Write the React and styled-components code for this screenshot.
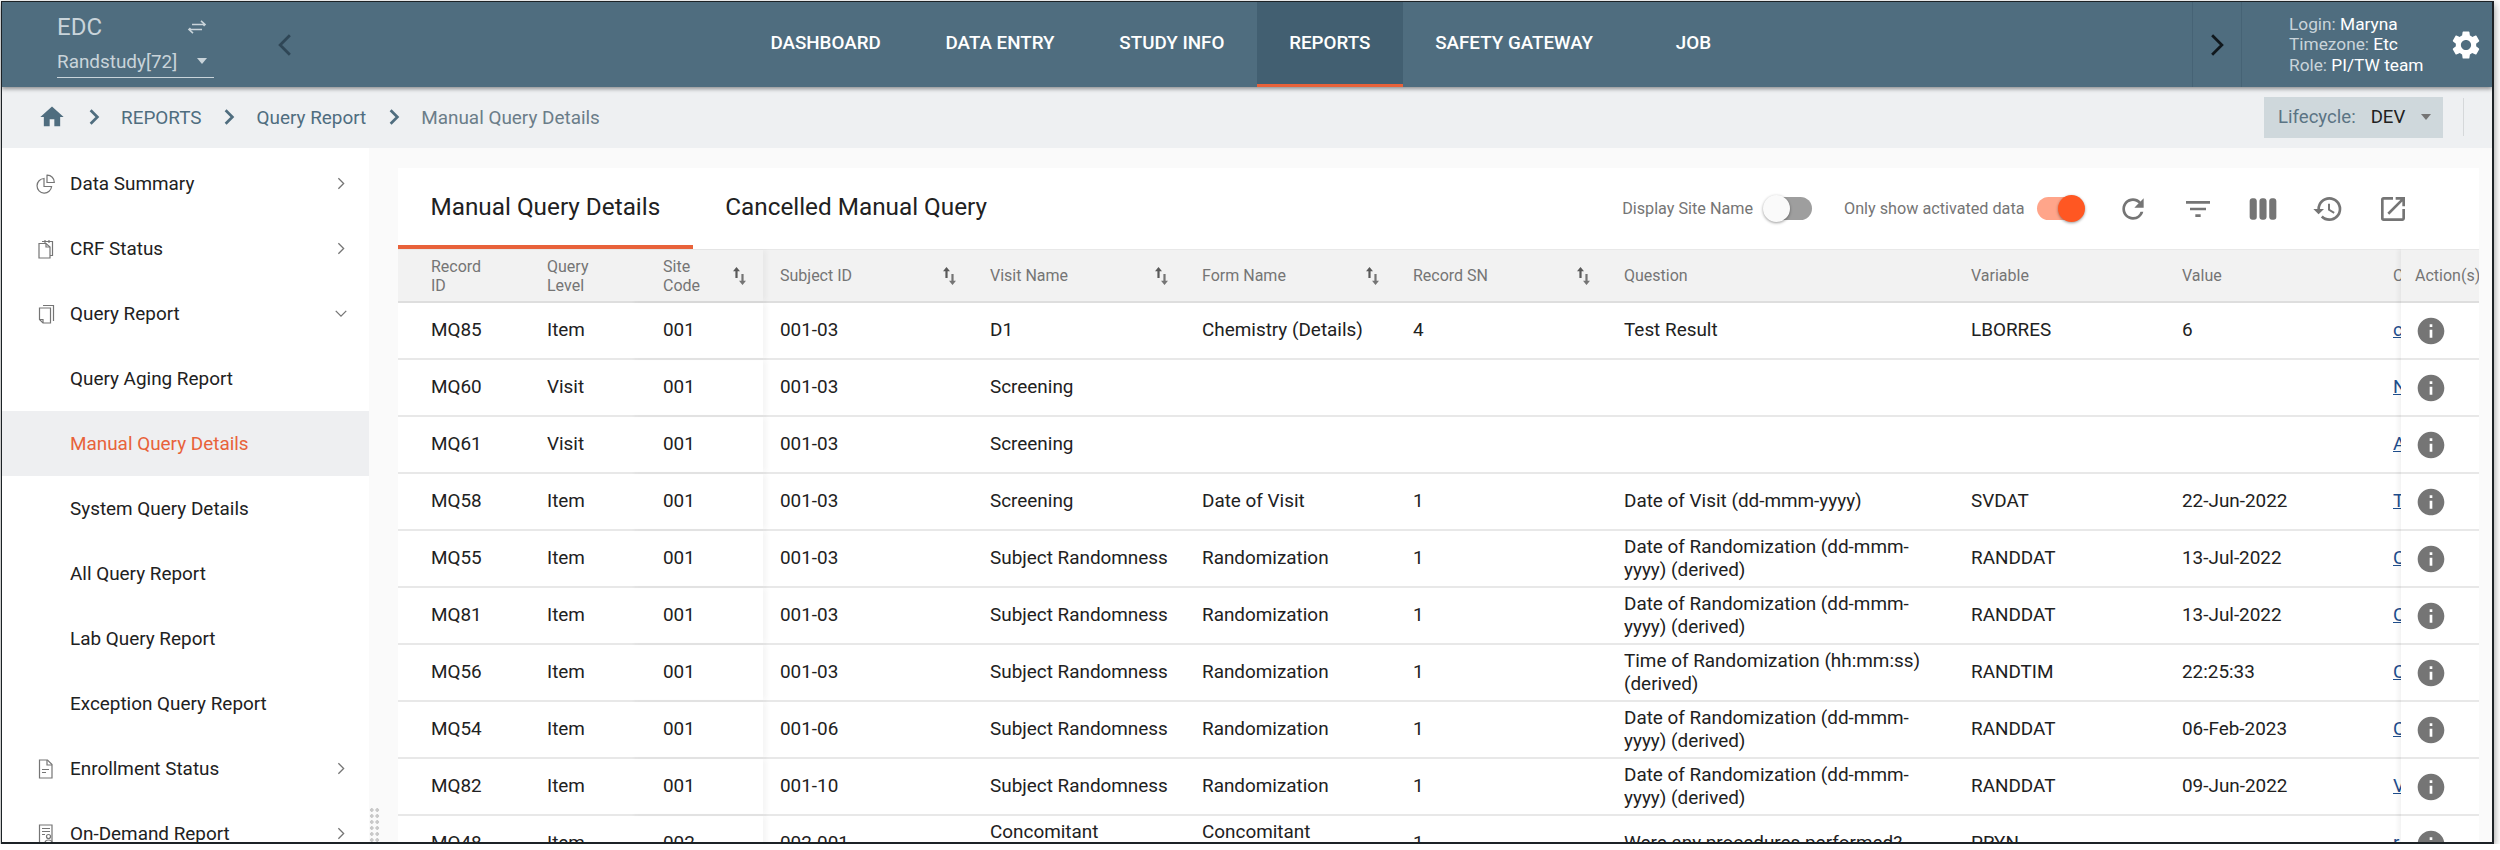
import React from "react";
import styled, { createGlobalStyle } from "styled-components";
import {
  MdHome,
  MdRefresh,
  MdFilterList,
  MdViewWeek,
  MdHistory,
  MdOpenInNew,
  MdInfo,
  MdSettings,
} from "react-icons/md";

const GlobalStyle = createGlobalStyle`
  html, body {
    margin: 0;
    padding: 0;
    background: #fff;
    font-family: Roboto, "Liberation Sans", sans-serif;
  }
  * { box-sizing: border-box; }
`;

const Frame = styled.div`
  width: 2493px;
  height: 843px;
  margin: 1px 0 0 1px;
  border: solid #1c2226;
  border-width: 1px 2px 2px 1px;
  box-shadow: 0 3px 8px rgba(0, 0, 0, 0.45);
  display: flex;
  flex-direction: column;
  overflow: hidden;
  background: #fff;
`;

const Header = styled.header`
  height: 85px;
  flex: none;
  display: flex;
  background: #4f6d7f;
  box-shadow: 0 2px 4px rgba(0, 0, 0, 0.4);
  position: relative;
  z-index: 2;
`;

const Brand = styled.div`
  width: 736px;
  display: flex;
  align-items: center;
  padding-left: 55px;
`;

const Project = styled.div`
  width: 157px;
  display: flex;
  flex-direction: column;
  color: #c9d4da;
`;

const ProductRow = styled.div`
  display: flex;
  align-items: center;
  justify-content: space-between;
  padding-right: 7px;
  height: 30px;
  font-size: 24px;
`;

const StudySelect = styled.div`
  display: flex;
  align-items: center;
  justify-content: space-between;
  margin-top: 7px;
  padding: 0 7px 3px 0;
  height: 29px;
  font-size: 18.9px;
  border-bottom: 1px solid #c9d4da;
`;

const Caret = styled.span`
  width: 0;
  height: 0;
  border-left: 5px solid transparent;
  border-right: 5px solid transparent;
  border-top: 6px solid ${(props) => props.color || "#c9d4da"};
`;

const BrandBack = styled.div`
  margin-left: 58px;
  display: flex;
  color: #2f4656;
`;

const Nav = styled.nav`
  flex: 1;
  display: flex;
`;

const NavItem = styled.a`
  display: flex;
  align-items: center;
  padding: 0 32.4px;
  margin-left: ${(props) => props.$gap || "0"};
  font-size: 18.8px;
  font-weight: 500;
  color: #fff;
  background: ${(props) => (props.$active ? "#425f71" : "transparent")};
  border-bottom: 3px solid ${(props) => (props.$active ? "#e8623a" : "transparent")};
`;

const NavScroll = styled.div`
  width: 50px;
  display: flex;
  align-items: center;
  justify-content: center;
  color: #10181d;
  border-left: 1px solid #466375;
  border-right: 1px solid #466375;
`;

const User = styled.div`
  width: 250px;
  display: flex;
  align-items: center;
  justify-content: space-between;
  padding: 0 9px 0 47px;
`;

const UserInfo = styled.div`
  font-size: 17.3px;
  line-height: 20.5px;
  color: #c9d4da;
  white-space: nowrap;
  b {
    font-weight: 400;
    color: #fff;
  }
`;

const CrumbBar = styled.div`
  height: 61px;
  flex: none;
  display: flex;
  align-items: center;
  padding: 0 28px 1px 36px;
  background: #eef0f2;
  font-size: 18.9px;
`;

const CrumbHome = styled.span`
  display: flex;
  color: #4f6d7f;
`;

const CrumbSep = styled.span`
  display: flex;
  margin: 0 18.5px;
  color: #4f6d7f;
`;

const CrumbLink = styled.span`
  color: ${(props) => (props.$current ? "#6b7d89" : "#4f6d7f")};
`;

const Lifecycle = styled.div`
  margin-left: auto;
  width: 179px;
  height: 41px;
  display: flex;
  align-items: center;
  padding: 0 12px 0 14px;
  background: #cfd8dc;
  font-size: 18.6px;
  color: #5b7484;
  b {
    margin-left: 15px;
    font-weight: 400;
    color: #212121;
  }
  span:last-child {
    margin-left: auto;
  }
`;

const BarDivider = styled.div`
  width: 1px;
  height: 38px;
  margin-left: 20px;
  background: #d5d8da;
`;

const Main = styled.div`
  flex: 1;
  min-height: 0;
  display: flex;
  position: relative;
`;

const Sidebar = styled.aside`
  width: 367px;
  flex: none;
  padding-top: 3px;
  overflow: hidden;
  background: #fff;
`;

const SideItem = styled.div`
  height: 65px;
  display: flex;
  align-items: center;
  padding: 0 17px 0 34px;
  font-size: 18.9px;
  color: ${(props) => (props.$active ? "#e8623a" : "#212121")};
  background: ${(props) => (props.$active ? "#eeeff1" : "transparent")};
`;

const SideIcon = styled.span`
  width: 34px;
  flex: none;
  display: flex;
  color: #757575;
`;

const SideLabel = styled.span`
  flex: 1;
  padding-left: ${(props) => (props.$sub ? "34px" : "0")};
`;

const SideArrow = styled.span`
  display: flex;
  width: 14px;
  justify-content: center;
  margin-right: 4px;
  color: #757575;
`;

const DragHandle = styled.div`
  position: absolute;
  left: 367px;
  bottom: 0;
  width: 11px;
  height: 35px;
  background-image: radial-gradient(circle, #c9c9c9 1.6px, transparent 1.8px);
  background-size: 5.5px 6px;
`;

const Content = styled.main`
  flex: 1;
  min-width: 0;
  padding: 20px 13px 0 29px;
  background: #fafafa;
`;

const Card = styled.section`
  height: 100%;
  display: flex;
  flex-direction: column;
  background: #fff;
`;

const CardTop = styled.div`
  height: 81px;
  flex: none;
  display: flex;
  align-items: stretch;
`;

const Tab = styled.div`
  display: flex;
  align-items: center;
  padding: 0 32.5px;
  font-size: 24.3px;
  color: #212121;
  border-bottom: 4px solid ${(props) => (props.$active ? "#e8623a" : "transparent")};
`;

const Tools = styled.div`
  margin-left: auto;
  display: flex;
  align-items: center;
  padding-right: 70px;
`;

const ToolLabel = styled.span`
  font-size: 16.2px;
  color: #757575;
`;

const Toggle = styled.div`
  position: relative;
  width: 46px;
  height: 23px;
  margin: 0 ${(props) => props.$after} 0 ${(props) => props.$before};
  border-radius: 12px;
  background: ${(props) => (props.$on ? "#ffa58a" : "#9e9e9e")};
  &::after {
    content: "";
    position: absolute;
    top: -2px;
    left: ${(props) => (props.$on ? "21px" : "-3px")};
    width: 27px;
    height: 27px;
    border-radius: 50%;
    background: ${(props) => (props.$on ? "#ff5722" : "#fafafa")};
    box-shadow: 0 1px 3px rgba(0, 0, 0, 0.4);
  }
`;

const ToolIcon = styled.span`
  width: 32px;
  height: 32px;
  display: flex;
  margin-left: ${(props) => props.$gap || "33px"};
  color: #757575;
`;

const TableArea = styled.div`
  flex: 1;
  min-height: 0;
  display: flex;
  overflow: hidden;
`;

const ScrollPane = styled.div`
  flex: 1;
  min-width: 0;
  overflow: hidden;
`;

const ActionPane = styled.div`
  width: 78px;
  flex: none;
  position: relative;
  box-shadow: -3px 0 4px rgba(0, 0, 0, 0.05);
`;

const columns = "116px 116px 133px 210px 212px 211px 211px 347px 211px 211px 120px";

const HeadRow = styled.div`
  height: 54px;
  display: grid;
  grid-template-columns: ${(props) => props.$columns || "1fr"};
  background: #f2f2f2;
  border-bottom: 2px solid #dedede;
  border-top: 1px solid #e8e8e8;
  font-size: 16px;
  line-height: 19px;
  color: #757575;
`;

const HeadCell = styled.div`
  display: flex;
  align-items: center;
  justify-content: space-between;
  min-width: 0;
  white-space: nowrap;
  padding: 0 17px 0 ${(props) => (props.$frozen ? "33px" : "17px")};
  box-shadow: ${(props) => (props.$edge ? "4px 0 5px rgba(0, 0, 0, 0.04)" : "none")};
`;

const ActionHead = styled(HeadCell)`
  padding: 0 0 0 14px;
`;

const HeadLabel = styled.span`
  white-space: ${(props) => (props.$wrap ? "normal" : "nowrap")};
  width: ${(props) => (props.$wrap ? "min-content" : "auto")};
`;

const BodyRow = styled.div`
  height: 57px;
  display: grid;
  grid-template-columns: ${(props) => props.$columns || "1fr"};
  border-bottom: 2px solid #e8e8e8;
  font-size: 18.9px;
  line-height: 22.4px;
  color: #212121;
`;

const Cell = styled.div`
  display: flex;
  align-items: center;
  min-width: 0;
  padding: 0 12px 0 ${(props) => (props.$frozen ? "33px" : "17px")};
  box-shadow: ${(props) => (props.$edge ? "4px 0 5px rgba(0, 0, 0, 0.04)" : "none")};
`;

const CommentLink = styled.a`
  color: #1f4e8c;
  text-decoration: underline;
`;

const ActionCell = styled.div`
  height: 100%;
  display: flex;
  align-items: center;
  padding-left: 14px;
  color: #757575;
`;

const SortSvg = styled.svg`
  flex: none;
`;

const Chevron = ({ dir = "right", size = 14, width = 2 }) => {
  const points = {
    right: "5,2 11,8 5,14",
    left: "11,2 5,8 11,14",
    down: "2,5 8,11 14,5",
  };
  return (
    <svg width={size} height={size} viewBox="0 0 16 16" fill="none" stroke="currentColor" strokeWidth={width}>
      <polyline points={points[dir]} />
    </svg>
  );
};

const SwapIcon = () => (
  <svg width="20" height="14" viewBox="0 0 20 14" fill="none" stroke="currentColor" strokeWidth="1.6">
    <path d="M5 4.5h13M14 .8l4 3.7-1.5 1.4" />
    <path d="M15 9.5H2M6 13.2 2 9.5l1.5-1.4" />
  </svg>
);

const SortIcon = () => (
  <SortSvg width="13" height="18" viewBox="0 0 13 18">
    <path d="M3.5 0 7 4.2H4.6V11H2.4V4.2H0z" fill="#5a5a5a" />
    <path d="M9.5 18 6 13.8h2.4V7h2.2v6.8H13z" fill="#757575" />
  </SortSvg>
);

const PieIcon = () => (
  <svg width="20" height="20" viewBox="0 0 20 20" fill="none" stroke="currentColor" strokeWidth="1.2">
    <path d="M8 4.5a7.3 7.3 0 1 0 7.6 8H8z" />
    <path d="M11 1.2a7 7 0 0 1 7.3 7.3H11z" />
  </svg>
);

const ClipboardIcon = () => (
  <svg width="20" height="20" viewBox="0 0 20 20" fill="none" stroke="currentColor" strokeWidth="1.2">
    <path d="M6 2.5h10.5v14H14" />
    <path d="M3 4.5h7l4 3.5v11H3z" />
    <path d="M9 1v3M13 1v3M10 4.5V8h4" />
  </svg>
);

const PagesIcon = () => (
  <svg width="20" height="20" viewBox="0 0 20 20" fill="none" stroke="currentColor" strokeWidth="1.2">
    <path d="M7 1.5h10.5V17" />
    <path d="M3.5 4h11v15H7l-3.5-3.5z" />
    <path d="M3.5 15.5H7V19" />
  </svg>
);

const DocIcon = () => (
  <svg width="20" height="20" viewBox="0 0 20 20" fill="none" stroke="currentColor" strokeWidth="1.2">
    <path d="M3.5 1h8L16 5.5V19H3.5z" />
    <path d="M11 1v5h5M6 10.5h7M6 13.5h4" />
  </svg>
);

const ReportIcon = () => (
  <svg width="20" height="20" viewBox="0 0 20 20" fill="none" stroke="currentColor" strokeWidth="1.2">
    <path d="M3.5 1h12.5v18H3.5z" />
    <path d="M6 4.5h8M6 7.5h8M6 10.5h3" />
    <circle cx="12.5" cy="12.5" r="2" />
    <path d="M9 19c0-4 7-4 7 0" />
  </svg>
);

const sideItems = [
  { label: "Data Summary", icon: <PieIcon />, arrow: "right" },
  { label: "CRF Status", icon: <ClipboardIcon />, arrow: "right" },
  { label: "Query Report", icon: <PagesIcon />, arrow: "down" },
  { label: "Query Aging Report" },
  { label: "Manual Query Details", active: true },
  { label: "System Query Details" },
  { label: "All Query Report" },
  { label: "Lab Query Report" },
  { label: "Exception Query Report" },
  { label: "Enrollment Status", icon: <DocIcon />, arrow: "right" },
  { label: "On-Demand Report", icon: <ReportIcon />, arrow: "right" },
];

const navItems = ["DASHBOARD", "DATA ENTRY", "STUDY INFO", "REPORTS", "SAFETY GATEWAY", "JOB"];

const headers = [
  { label: "Record ID", wrap: true, frozen: true },
  { label: "Query Level", wrap: true, frozen: true },
  { label: "Site Code", wrap: true, frozen: true, sort: true, edge: true },
  { label: "Subject ID", sort: true },
  { label: "Visit Name", sort: true },
  { label: "Form Name", sort: true },
  { label: "Record SN", sort: true },
  { label: "Question" },
  { label: "Variable" },
  { label: "Value" },
  { label: "C" },
];

const randDate = "Date of Randomization (dd-mmm-yyyy) (derived)";

const rows = [
  ["MQ85", "Item", "001", "001-03", "D1", "Chemistry (Details)", "4", "Test Result", "LBORRES", "6", "c"],
  ["MQ60", "Visit", "001", "001-03", "Screening", "", "", "", "", "", "N"],
  ["MQ61", "Visit", "001", "001-03", "Screening", "", "", "", "", "", "A"],
  ["MQ58", "Item", "001", "001-03", "Screening", "Date of Visit", "1", "Date of Visit (dd-mmm-yyyy)", "SVDAT", "22-Jun-2022", "T"],
  ["MQ55", "Item", "001", "001-03", "Subject Randomness", "Randomization", "1", randDate, "RANDDAT", "13-Jul-2022", "C"],
  ["MQ81", "Item", "001", "001-03", "Subject Randomness", "Randomization", "1", randDate, "RANDDAT", "13-Jul-2022", "C"],
  ["MQ56", "Item", "001", "001-03", "Subject Randomness", "Randomization", "1", "Time of Randomization (hh:mm:ss) (derived)", "RANDTIM", "22:25:33", "C"],
  ["MQ54", "Item", "001", "001-06", "Subject Randomness", "Randomization", "1", randDate, "RANDDAT", "06-Feb-2023", "C"],
  ["MQ82", "Item", "001", "001-10", "Subject Randomness", "Randomization", "1", randDate, "RANDDAT", "09-Jun-2022", "V"],
  ["MQ48", "Item", "002", "002-001", "Concomitant Medications", "Concomitant Medications", "1", "Were any procedures performed?", "PRYN", "", "r"],
];

export default function App() {
  return (
    <>
      <GlobalStyle />
      <Frame>
        <Header>
          <Brand>
            <Project>
              <ProductRow>
                EDC
                <SwapIcon />
              </ProductRow>
              <StudySelect>
                Randstudy[72]
                <Caret />
              </StudySelect>
            </Project>
            <BrandBack>
              <Chevron dir="left" size={26} width={1.7} />
            </BrandBack>
          </Brand>
          <Nav>
            {navItems.map((item) => (
              <NavItem key={item} $active={item === "REPORTS"} $gap={item === "JOB" ? "18px" : undefined}>
                {item}
              </NavItem>
            ))}
          </Nav>
          <NavScroll>
            <Chevron size={26} width={1.7} />
          </NavScroll>
          <User>
            <UserInfo>
              Login: <b>Maryna</b>
              <br />
              Timezone: <b>Etc</b>
              <br />
              Role: <b>PI/TW team</b>
            </UserInfo>
            <MdSettings size={34} color="#fff" />
          </User>
        </Header>
        <CrumbBar>
          <CrumbHome>
            <MdHome size={28} />
          </CrumbHome>
          <CrumbSep>
            <Chevron size={18} width={2.4} />
          </CrumbSep>
          <CrumbLink>REPORTS</CrumbLink>
          <CrumbSep>
            <Chevron size={18} width={2.4} />
          </CrumbSep>
          <CrumbLink>Query Report</CrumbLink>
          <CrumbSep>
            <Chevron size={18} width={2.4} />
          </CrumbSep>
          <CrumbLink $current>Manual Query Details</CrumbLink>
          <Lifecycle>
            Lifecycle:
            <b>DEV</b>
            <Caret color="#757575" />
          </Lifecycle>
          <BarDivider />
        </CrumbBar>
        <Main>
          <Sidebar>
            {sideItems.map((item) => (
              <SideItem key={item.label} $active={item.active}>
                {item.icon && <SideIcon>{item.icon}</SideIcon>}
                <SideLabel $sub={!item.icon}>{item.label}</SideLabel>
                {item.arrow && (
                  <SideArrow>
                    <Chevron dir={item.arrow} size={15} width={1.5} />
                  </SideArrow>
                )}
              </SideItem>
            ))}
          </Sidebar>
          <DragHandle />
          <Content>
            <Card>
              <CardTop>
                <Tab $active>Manual Query Details</Tab>
                <Tab>Cancelled Manual Query</Tab>
                <Tools>
                  <ToolLabel>Display Site Name</ToolLabel>
                  <Toggle $before="13px" $after="32px" />
                  <ToolLabel>Only show activated data</ToolLabel>
                  <Toggle $on $before="12px" $after="0" />
                  <ToolIcon $gap="34.5px">
                    <MdRefresh size={32} />
                  </ToolIcon>
                  <ToolIcon>
                    <MdFilterList size={32} />
                  </ToolIcon>
                  <ToolIcon>
                    <MdViewWeek size={32} />
                  </ToolIcon>
                  <ToolIcon>
                    <MdHistory size={32} />
                  </ToolIcon>
                  <ToolIcon>
                    <MdOpenInNew size={32} />
                  </ToolIcon>
                </Tools>
              </CardTop>
              <TableArea>
                <ScrollPane>
                  <HeadRow $columns={columns}>
                    {headers.map((head) => (
                      <HeadCell key={head.label} $frozen={head.frozen} $edge={head.edge}>
                        <HeadLabel $wrap={head.wrap}>{head.label}</HeadLabel>
                        {head.sort && <SortIcon />}
                      </HeadCell>
                    ))}
                  </HeadRow>
                  {rows.map((row) => (
                    <BodyRow key={row[0]} $columns={columns}>
                      {row.map((value, i) => (
                        <Cell key={i} $frozen={i < 3} $edge={i === 2}>
                          {i === 10 ? <CommentLink>{value}</CommentLink> : value}
                        </Cell>
                      ))}
                    </BodyRow>
                  ))}
                </ScrollPane>
                <ActionPane>
                  <HeadRow>
                    <ActionHead>Action(s)</ActionHead>
                  </HeadRow>
                  {rows.map((row) => (
                    <BodyRow key={row[0]}>
                      <ActionCell>
                        <MdInfo size={32} />
                      </ActionCell>
                    </BodyRow>
                  ))}
                </ActionPane>
              </TableArea>
            </Card>
          </Content>
        </Main>
      </Frame>
    </>
  );
}
